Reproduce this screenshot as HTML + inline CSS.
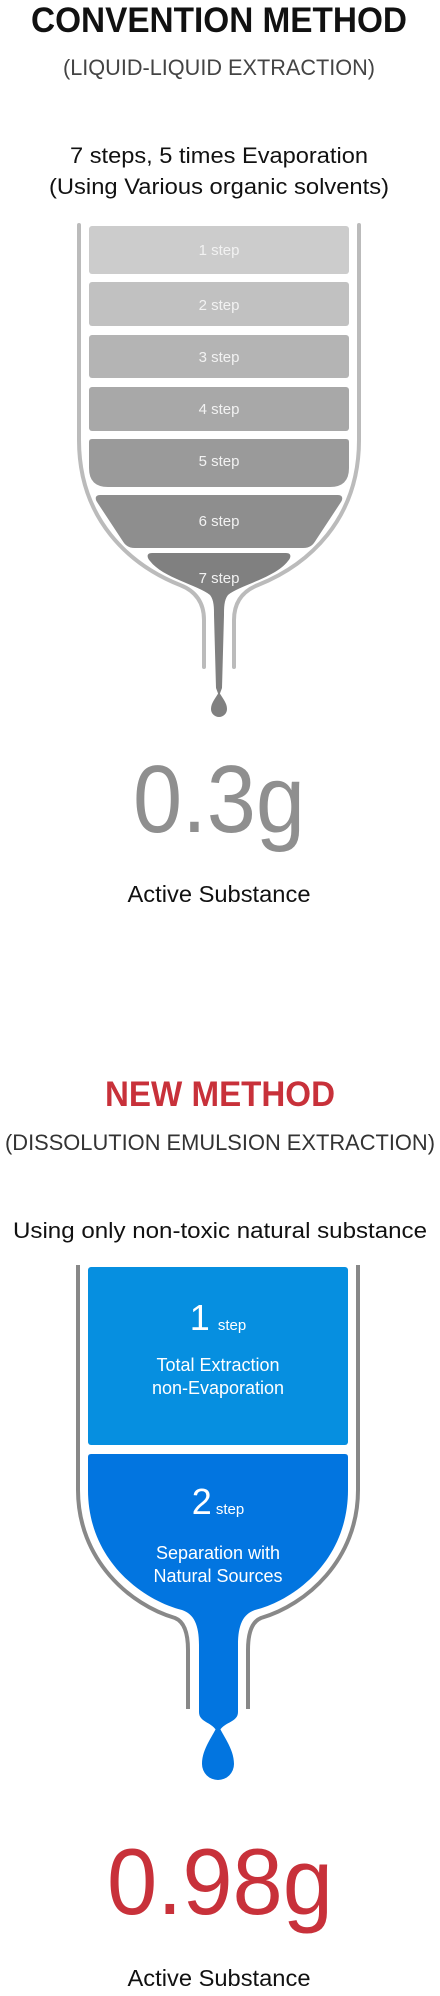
<!DOCTYPE html>
<html><head><meta charset="utf-8"><style>
html,body{margin:0;padding:0;background:#fff;width:440px;height:1996px;overflow:hidden}
svg{display:block}
text{font-family:"Liberation Sans",Arial,sans-serif}
</style></head><body>
<svg width="440" height="1996" viewBox="0 0 440 1996" xmlns="http://www.w3.org/2000/svg">
<text x="219" y="32" text-anchor="middle" font-size="35" font-weight="bold" fill="#111" textLength="376" lengthAdjust="spacingAndGlyphs">CONVENTION METHOD</text>
<text x="219" y="75" text-anchor="middle" font-size="22" fill="#444" textLength="312" lengthAdjust="spacingAndGlyphs">(LIQUID-LIQUID EXTRACTION)</text>
<text x="219" y="163" text-anchor="middle" font-size="22" fill="#111" textLength="298" lengthAdjust="spacingAndGlyphs">7 steps, 5 times Evaporation</text>
<text x="219" y="194" text-anchor="middle" font-size="22" fill="#111" textLength="340" lengthAdjust="spacingAndGlyphs">(Using Various organic solvents)</text>

<g fill="none" stroke="#bbbbbb" stroke-width="4" stroke-linecap="round">
<path d="M79,225 V440 C79,520 130,565 180,585 C198,592 204,605 204,620 V667"/>
<path d="M359,225 V440 C359,520 308,565 258,585 C240,592 234,605 234,620 V667"/>
</g>
<rect x="89" y="226" width="260" height="48" rx="3" fill="#cccccc"/>
<rect x="89" y="282" width="260" height="44" rx="3" fill="#c1c1c1"/>
<rect x="89" y="335" width="260" height="43" rx="3" fill="#b4b4b4"/>
<rect x="89" y="387" width="260" height="44" rx="3" fill="#a8a8a8"/>
<path d="M92,439 H346 Q349,439 349,442 V468 Q349,487 330,487 H108 Q89,487 89,468 V442 Q89,439 92,439Z" fill="#9a9a9a"/>
<path d="M100,495 H338 C343,495 343,499 341,502 L316,540 C313,545 310,548 303,548 H135 C128,548 125,545 122,540 L97,502 C95,499 95,495 100,495Z" fill="#8e8e8e"/>
<path d="M152,553 H286 C292,553 291,558 288,561 C275,578 240,585 228,595 C224,600 224,608 224,615 L222,688 L219,696 L216,688 L214,615 C214,608 214,600 210,595 C198,585 163,578 150,561 C147,558 146,553 152,553 Z" fill="#808080"/>
<path d="M219,692 C215,699 211,703 211,709 A8,8 0 0 0 227,709 C227,703 223,699 219,692 Z" fill="#808080"/>
<g fill="#f2f2f2" font-size="15" text-anchor="middle">
<text x="219" y="255">1 step</text>
<text x="219" y="310">2 step</text>
<text x="219" y="362">3 step</text>
<text x="219" y="414">4 step</text>
<text x="219" y="466">5 step</text>
<text x="219" y="526">6 step</text>
<text x="219" y="583">7 step</text>
</g>
<text x="219" y="832" text-anchor="middle" font-size="96" fill="#8f8f8f" textLength="172" lengthAdjust="spacingAndGlyphs">0.3g</text>
<text x="219" y="902" text-anchor="middle" font-size="23" fill="#111" textLength="183" lengthAdjust="spacingAndGlyphs">Active Substance</text>

<text x="220" y="1106" text-anchor="middle" font-size="35" font-weight="bold" fill="#c8313a" textLength="230" lengthAdjust="spacingAndGlyphs">NEW METHOD</text>
<text x="220" y="1150" text-anchor="middle" font-size="22" fill="#333" textLength="430" lengthAdjust="spacingAndGlyphs">(DISSOLUTION EMULSION EXTRACTION)</text>
<text x="220" y="1238" text-anchor="middle" font-size="22" fill="#111" textLength="414" lengthAdjust="spacingAndGlyphs">Using only  non-toxic natural substance</text>

<g fill="none" stroke="#888888" stroke-width="4" stroke-linecap="butt">
<path d="M78,1265 V1490 C78,1560 130,1605 175,1618 C185,1622 188,1635 188,1650 V1709"/>
<path d="M358,1265 V1490 C358,1560 306,1605 261,1618 C251,1622 248,1635 248,1650 V1709"/>
</g>
<rect x="88" y="1267" width="260" height="178" rx="3" fill="#068fe0"/>
<path d="M91,1454 H345 Q348,1454 348,1457 V1490 C348,1560 295,1600 255,1610 C243,1614 238,1625 238,1645 V1712 C238,1722 225,1722 220,1730 H216 C211,1722 199,1722 199,1712 V1645 C199,1625 194,1614 182,1610 C142,1600 88,1560 88,1490 V1457 Q88,1454 91,1454Z" fill="#0275e0"/>
<path d="M218,1724 C214,1735 202,1748 202,1764 A16,16 0 0 0 234,1764 C234,1748 222,1735 218,1724Z" fill="#0275e0"/>
<g fill="#fff" text-anchor="middle">
<text x="218" y="1330"><tspan font-size="36">1</tspan><tspan font-size="15" dx="8">step</tspan></text>
<text x="218" y="1371" font-size="18">Total Extraction</text>
<text x="218" y="1394" font-size="18">non-Evaporation</text>
<text x="218" y="1514"><tspan font-size="36">2</tspan><tspan font-size="15" dx="4">step</tspan></text>
<text x="218" y="1559" font-size="18">Separation with</text>
<text x="218" y="1582" font-size="18">Natural Sources</text>
</g>
<text x="220" y="1914" text-anchor="middle" font-size="94" fill="#c8313a" textLength="226" lengthAdjust="spacingAndGlyphs">0.98g</text>
<text x="219" y="1986" text-anchor="middle" font-size="23" fill="#111" textLength="183" lengthAdjust="spacingAndGlyphs">Active Substance</text>
</svg>
</body></html>
